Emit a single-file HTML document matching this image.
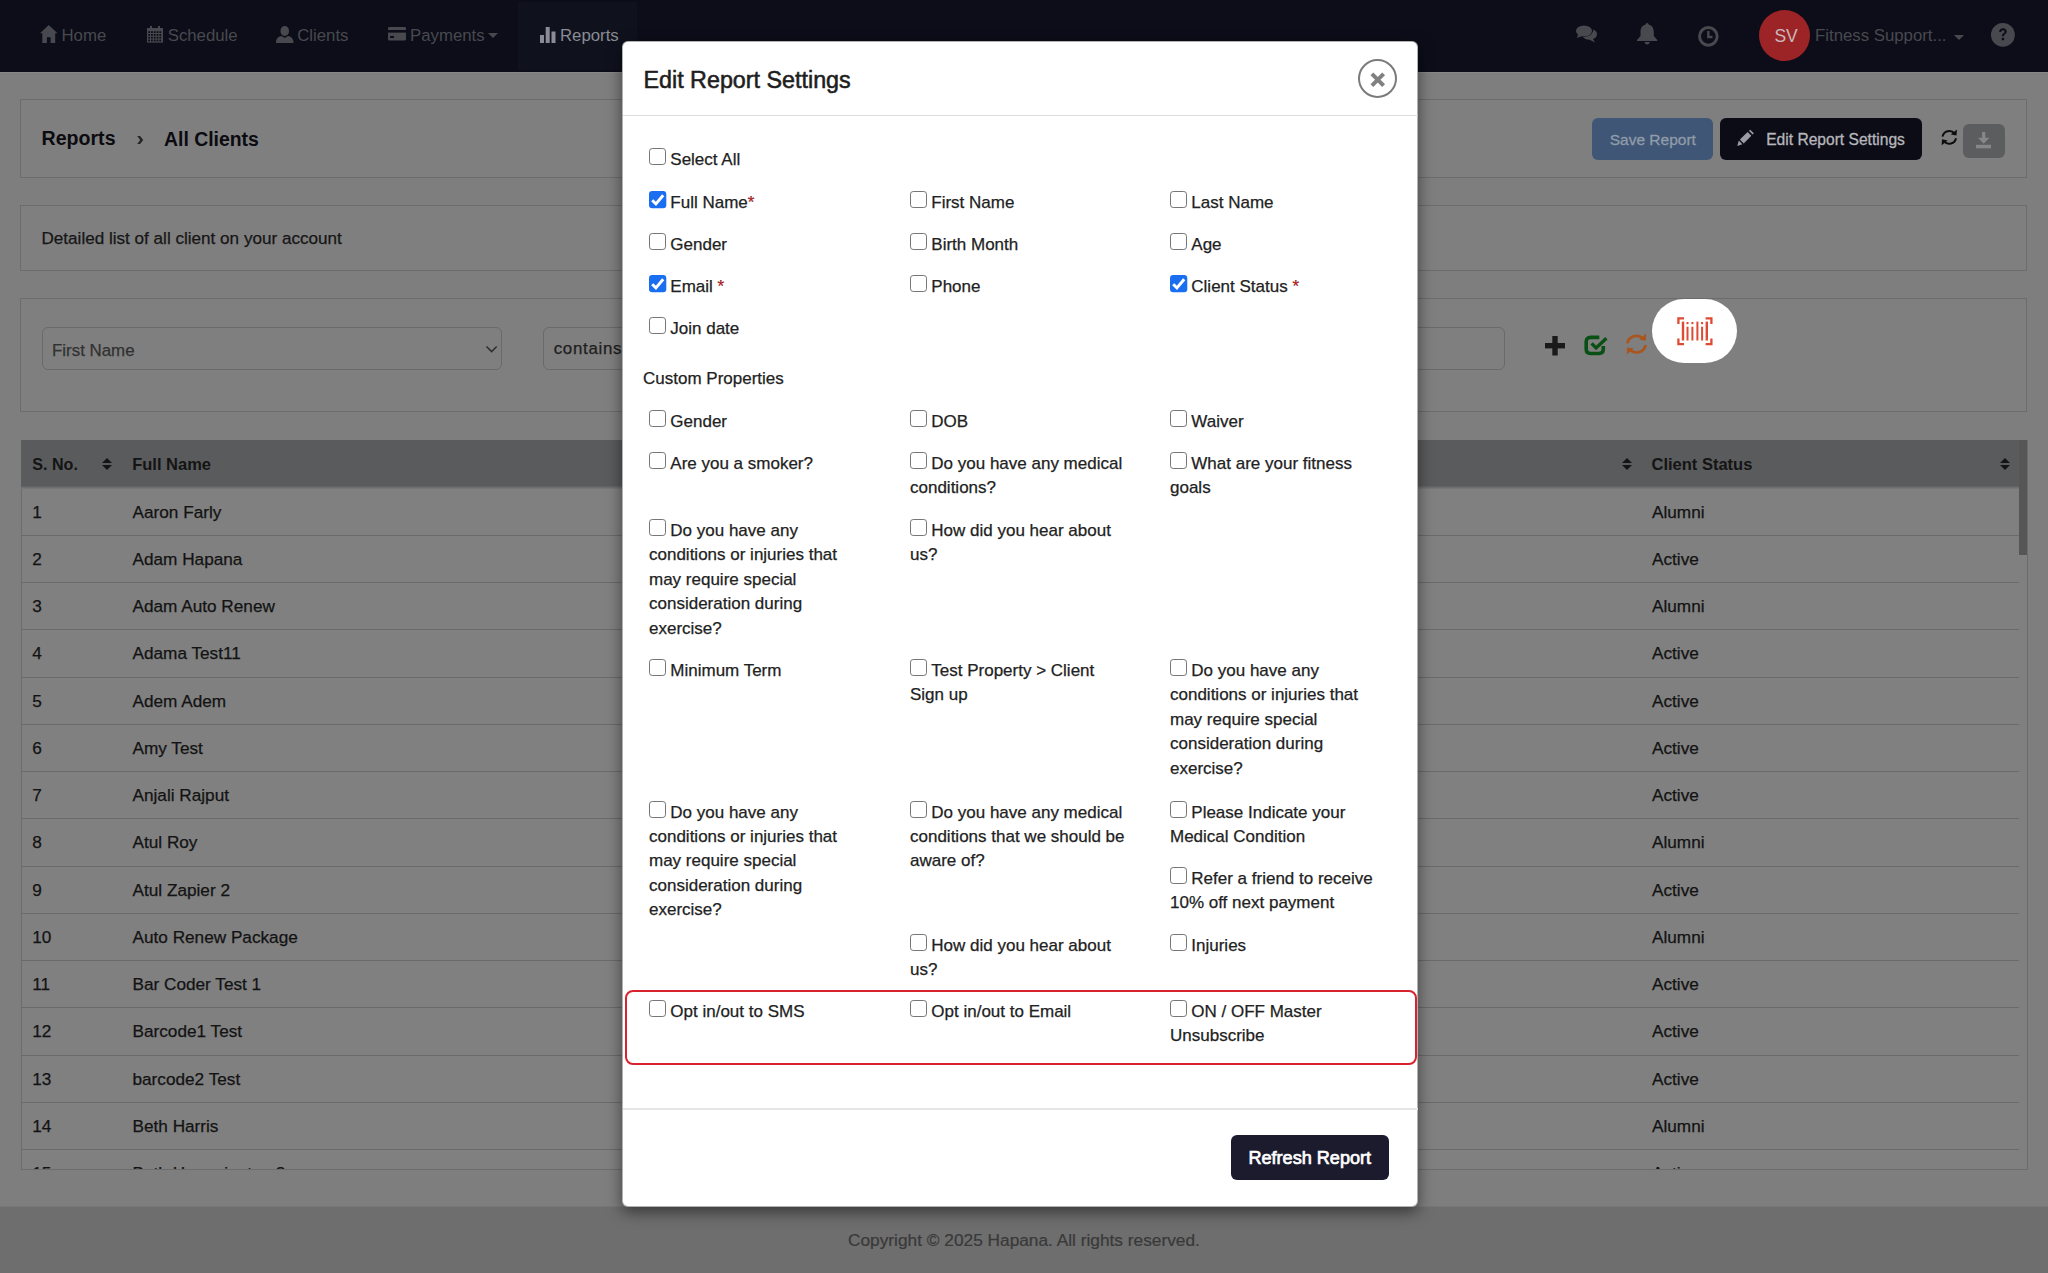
<!DOCTYPE html>
<html><head><meta charset="utf-8"><title>Edit Report Settings</title>
<style>
html,body{margin:0;padding:0;}
body{width:2048px;height:1273px;overflow:hidden;position:relative;background:#7e7e7e;font-family:"Liberation Sans", sans-serif;}
.t{position:absolute;white-space:nowrap;}
.r{position:absolute;box-sizing:border-box;}
svg.r{overflow:visible;}
</style></head><body>

<div class="r" style="left:0.00px;top:0.00px;width:2048.00px;height:72.00px;background:#0c0d18;"></div>
<div class="r" style="left:518.00px;top:2.00px;width:119.00px;height:68.00px;background:#0f121d;"></div>
<div class="r" style="left:0.00px;top:72.00px;width:2048.00px;height:1.00px;background:#868788;"></div>
<svg class="r" style="left:40.30px;top:25.30px;" width="17.50" height="18.00" viewBox="0 0 17.5 18"><path d="M8.75 0 L17.5 8.2 L15.2 8.2 L15.2 18 L10.6 18 L10.6 12.2 L6.9 12.2 L6.9 18 L2.3 18 L2.3 8.2 L0 8.2 Z" fill="#48494f"/></svg>
<div class="t" style="left:61.50px;top:27.68px;font-size:16.8px;line-height:16.8px;font-weight:400;color:#48494f;">Home</div>
<svg class="r" style="left:146.50px;top:26.30px;" width="16.00" height="16.60" viewBox="0 0 16 16.6"><rect x="0" y="2" width="16" height="14.6" fill="#48494f"/><rect x="3" y="0" width="2" height="4" fill="#48494f"/><rect x="11" y="0" width="2" height="4" fill="#48494f"/><rect x="1.2" y="5.2" width="1.8" height="1.8" fill="#0c0d18"/><rect x="4.0" y="5.2" width="1.8" height="1.8" fill="#0c0d18"/><rect x="6.8" y="5.2" width="1.8" height="1.8" fill="#0c0d18"/><rect x="9.6" y="5.2" width="1.8" height="1.8" fill="#0c0d18"/><rect x="12.4" y="5.2" width="1.8" height="1.8" fill="#0c0d18"/><rect x="1.2" y="8.0" width="1.8" height="1.8" fill="#0c0d18"/><rect x="4.0" y="8.0" width="1.8" height="1.8" fill="#0c0d18"/><rect x="6.8" y="8.0" width="1.8" height="1.8" fill="#0c0d18"/><rect x="9.6" y="8.0" width="1.8" height="1.8" fill="#0c0d18"/><rect x="12.4" y="8.0" width="1.8" height="1.8" fill="#0c0d18"/><rect x="1.2" y="10.8" width="1.8" height="1.8" fill="#0c0d18"/><rect x="4.0" y="10.8" width="1.8" height="1.8" fill="#0c0d18"/><rect x="6.8" y="10.8" width="1.8" height="1.8" fill="#0c0d18"/><rect x="9.6" y="10.8" width="1.8" height="1.8" fill="#0c0d18"/><rect x="12.4" y="10.8" width="1.8" height="1.8" fill="#0c0d18"/><rect x="1.2" y="13.6" width="1.8" height="1.8" fill="#0c0d18"/><rect x="4.0" y="13.6" width="1.8" height="1.8" fill="#0c0d18"/><rect x="6.8" y="13.6" width="1.8" height="1.8" fill="#0c0d18"/><rect x="9.6" y="13.6" width="1.8" height="1.8" fill="#0c0d18"/><rect x="12.4" y="13.6" width="1.8" height="1.8" fill="#0c0d18"/></svg>
<div class="t" style="left:167.70px;top:27.68px;font-size:16.8px;line-height:16.8px;font-weight:400;color:#48494f;">Schedule</div>
<svg class="r" style="left:275.60px;top:26.00px;" width="17.50" height="17.00" viewBox="0 0 17.5 17"><ellipse cx="8.75" cy="5" rx="4.3" ry="5" fill="#48494f"/><path d="M0 17 C0 12 3 10.5 5.5 10 L8.75 12 L12 10 C14.5 10.5 17.5 12 17.5 17 Z" fill="#48494f"/></svg>
<div class="t" style="left:297.20px;top:27.68px;font-size:16.8px;line-height:16.8px;font-weight:400;color:#48494f;">Clients</div>
<svg class="r" style="left:388.20px;top:27.00px;" width="18.00" height="13.60" viewBox="0 0 18 13.6"><rect x="0" y="0" width="18" height="13.6" rx="1.5" fill="#48494f"/><rect x="0" y="3" width="18" height="2.6" fill="#0c0d18"/><rect x="2" y="9" width="4" height="2" fill="#0c0d18"/></svg>
<div class="t" style="left:410.00px;top:27.68px;font-size:16.8px;line-height:16.8px;font-weight:400;color:#48494f;">Payments</div>
<svg class="r" style="left:488.00px;top:33.00px;" width="10.00" height="5.00" viewBox="0 0 10 5"><path d="M0 0 L10 0 L5 5 Z" fill="#48494f"/></svg>
<svg class="r" style="left:539.50px;top:27.00px;" width="15.50" height="16.00" viewBox="0 0 15.5 16"><rect x="0" y="8" width="4" height="8" fill="#8a8b94"/><rect x="5.7" y="0" width="4" height="16" fill="#8a8b94"/><rect x="11.5" y="4.5" width="4" height="11.5" fill="#8a8b94"/></svg>
<div class="t" style="left:560.00px;top:27.68px;font-size:16.8px;line-height:16.8px;font-weight:400;color:#8a8b94;">Reports</div>
<svg class="r" style="left:1575.50px;top:25.00px;" width="21.00" height="17.50" viewBox="0 0 21 17.5"><ellipse cx="8" cy="6" rx="8" ry="5.6" fill="#48494f"/><path d="M2 9.5 L1 13 L6 11 Z" fill="#48494f"/><path d="M17.3 4.5 C20 5.5 21 7.5 21 9.2 C21 11.5 19.5 13 17 14 L19 17.5 L13.5 14.8 C10.5 14.8 8 13.5 7 12 C12.5 12 17 9.5 17.3 4.5 Z" fill="#48494f"/></svg>
<svg class="r" style="left:1636.70px;top:23.40px;" width="20.30" height="21.40" viewBox="0 0 20.3 21.4"><path d="M10.15 0 C11.2 0 11.6 0.8 11.6 1.6 C15.2 2.5 16.8 5.5 16.8 9 L16.8 13 L20.3 17 L20.3 18 L0 18 L0 17 L3.5 13 L3.5 9 C3.5 5.5 5.1 2.5 8.7 1.6 C8.7 0.8 9.1 0 10.15 0 Z" fill="#48494f"/><path d="M7.6 19 L12.7 19 C12.7 20.5 11.6 21.4 10.15 21.4 C8.7 21.4 7.6 20.5 7.6 19 Z" fill="#48494f"/></svg>
<svg class="r" style="left:1697.70px;top:25.70px;" width="20.70" height="20.80" viewBox="0 0 20.7 20.8"><circle cx="10.35" cy="10.4" r="8.8" fill="none" stroke="#48494f" stroke-width="3"/><path d="M10.35 5 L10.35 11 L14.5 11" fill="none" stroke="#48494f" stroke-width="2.4"/></svg>
<div class="r" style="left:1759px;top:9.5px;width:51px;height:51px;border-radius:50%;background:#9c2427;"></div>
<div class="t" style="left:1774.40px;top:27.59px;font-size:17.5px;line-height:17.5px;font-weight:400;color:#c9b9ba;">SV</div>
<div class="t" style="left:1815.00px;top:27.98px;font-size:16.8px;line-height:16.8px;font-weight:400;color:#48494f;">Fitness Support...</div>
<svg class="r" style="left:1954.00px;top:35.00px;" width="10.00" height="5.00" viewBox="0 0 10 5"><path d="M0 0 L10 0 L5 5 Z" fill="#48494f"/></svg>
<svg class="r" style="left:1990.80px;top:23.40px;" width="23.80" height="23.80" viewBox="0 0 23.8 23.8"><circle cx="11.9" cy="11.9" r="11.9" fill="#48494f"/><path d="M8.2 9 C8.2 6.5 10 5.3 12 5.3 C14.3 5.3 15.8 6.7 15.8 8.6 C15.8 11 12.9 11.3 12.9 13.3 L10.9 13.3 C10.9 10.2 13.6 10.2 13.6 8.7 C13.6 7.8 12.9 7.2 11.9 7.2 C10.9 7.2 10.3 7.9 10.3 9 Z" fill="#0c0d18"/><rect x="10.8" y="14.8" width="2.3" height="2.4" fill="#0c0d18"/></svg>
<div class="r" style="left:20.00px;top:99.00px;width:2007.00px;height:78.50px;border:1px solid #6c6c6c;background:#7f7f7f;"></div>
<div class="t" style="left:41.50px;top:129.41px;font-size:19.6px;line-height:19.6px;font-weight:700;color:#0b0b10;">Reports</div>
<svg class="r" style="left:137.00px;top:135.90px;" width="6.30" height="8.10" viewBox="0 0 6.3 8.1"><path d="M0.2 0 L3.1 0 L6.2 4.05 L3.1 8.1 L0.2 8.1 L3.2 4.05 Z" fill="#262626"/></svg>
<div class="t" style="left:164.00px;top:129.58px;font-size:19.4px;line-height:19.4px;font-weight:700;color:#0b0b10;">All Clients</div>
<div class="r" style="left:1592.30px;top:117.60px;width:120.50px;height:42.30px;background:#405677;border-radius:6px;"></div>
<div class="t" style="left:1609.70px;top:131.98px;font-size:15.5px;line-height:15.5px;font-weight:400;color:#909ca8;-webkit-text-stroke:0.3px #909ca8;">Save Report</div>
<div class="r" style="left:1720.00px;top:117.60px;width:202.00px;height:42.30px;background:#0c0c16;border-radius:6px;"></div>
<svg class="r" style="left:1736.50px;top:130.00px;" width="16.50" height="16.50" viewBox="0 0 16.5 16.5"><path d="M0.3 15.9 L1.8 10.6 L5.4 14.3 Z" fill="#9c9ca6"/><path d="M2.9 9.6 L10.6 1.9 L14.4 5.7 L6.7 13.4 Z" fill="#9c9ca6"/><path d="M11.9 0.8 L13.2 -0.3 L16.9 3.2 L15.6 4.5 Z" fill="#9c9ca6"/></svg>
<div class="t" style="left:1766.20px;top:131.89px;font-size:15.6px;line-height:15.6px;font-weight:400;color:#b6b6bc;-webkit-text-stroke:0.3px #b6b6bc;">Edit Report Settings</div>
<svg class="r" style="left:1941.00px;top:129.00px;" width="16.50" height="16.80" viewBox="0 0 16.5 16.8"><path d="M13.6 4.6 A6.9 6.9 0 0 0 1.5 7.6" fill="none" stroke="#0d0d0d" stroke-width="2"/><path d="M15.9 0.6 L15.5 6.6 L9.8 5.4 Z" fill="#0d0d0d"/><path d="M2.9 12.2 A6.9 6.9 0 0 0 15.0 9.2" fill="none" stroke="#0d0d0d" stroke-width="2"/><path d="M0.6 16.3 L1 10.3 L6.8 11.4 Z" fill="#0d0d0d"/></svg>
<div class="r" style="left:1963.20px;top:123.50px;width:42.10px;height:34.20px;background:#5c5d5f;border-radius:6px;"></div>
<svg class="r" style="left:1976.00px;top:132.40px;" width="15.00" height="16.50" viewBox="0 0 15 16.5"><path d="M6.1 0 L9.3 0 L9.3 5.8 L13.4 5.8 L7.7 11.7 L2 5.8 L6.1 5.8 Z" fill="#878787"/><rect x="0" y="12.8" width="15" height="3.5" fill="#878787"/></svg>
<div class="r" style="left:20.00px;top:205.00px;width:2007.00px;height:65.50px;border:1px solid #6c6c6c;background:#7f7f7f;"></div>
<div class="t" style="left:41.50px;top:229.52px;font-size:17.1px;line-height:17.1px;font-weight:400;color:#161616;-webkit-text-stroke:0.25px #161616;">Detailed list of all client on your account</div>
<div class="r" style="left:20.00px;top:298.30px;width:2007.00px;height:113.70px;border:1px solid #6c6c6c;background:#7f7f7f;"></div>
<div class="r" style="left:41.70px;top:326.60px;width:460.70px;height:43.80px;border:1px solid #6a6a6a;border-radius:6px;"></div>
<div class="t" style="left:52.00px;top:342.69px;font-size:16.9px;line-height:16.9px;font-weight:400;color:#313131;-webkit-text-stroke:0.25px #313131;">First Name</div>
<svg class="r" style="left:486.00px;top:345.70px;" width="11.20" height="6.30" viewBox="0 0 11.2 6.3"><path d="M0.5 0.5 L5.6 5.6 L10.7 0.5" fill="none" stroke="#2e2e2e" stroke-width="1.5"/></svg>
<div class="r" style="left:543.00px;top:326.60px;width:962.20px;height:43.80px;border:1px solid #6a6a6a;border-radius:6px;"></div>
<div class="t" style="left:553.70px;top:341.49px;font-size:16.9px;line-height:16.9px;font-weight:400;color:#1e1e1e;letter-spacing:0.7px;-webkit-text-stroke:0.25px #1e1e1e;">contains</div>
<svg class="r" style="left:1545.00px;top:336.00px;" width="20.00" height="19.50" viewBox="0 0 20 19.5"><rect x="7.3" y="0" width="5.4" height="19.5" fill="#1a1a1a"/><rect x="0" y="7" width="20" height="5.4" fill="#1a1a1a"/></svg>
<svg class="r" style="left:1584.00px;top:334.50px;" width="23.00" height="21.00" viewBox="0 0 23 21"><path d="M15.3 2.4 L6.6 2.4 Q2.2 2.4 2.2 6.8 L2.2 14.1 Q2.2 18.5 6.6 18.5 L14.9 18.5 Q19.3 18.5 19.3 14.1 L19.3 11" fill="none" stroke="#0a4f14" stroke-width="3.6"/><path d="M7.6 8.4 L12.1 12.9 L22.4 3.3" fill="none" stroke="#0a4f14" stroke-width="3.4"/></svg>
<svg class="r" style="left:1625.00px;top:333.00px;" width="23.00" height="22.00" viewBox="0 0 23 22"><path d="M17.9 5.6 A9.2 9.2 0 0 0 2.3 10.3" fill="none" stroke="#a9551d" stroke-width="2.7"/><path d="M21 0.6 L20.9 7.7 L14.3 6.8 Z" fill="#a9551d"/><path d="M5.1 16.7 A9.2 9.2 0 0 0 20.7 11.9" fill="none" stroke="#a9551d" stroke-width="2.7"/><path d="M1.9 21.5 L2.1 14.5 L8.6 15.4 Z" fill="#a9551d"/></svg>
<div class="r" style="left:20.50px;top:439.60px;width:2007.00px;height:730.60px;border-left:1px solid #6c6c6c;border-right:1px solid #6c6c6c;border-bottom:1px solid #6c6c6c;background:#808080;overflow:hidden;"></div>
<div class="r" style="left:21.00px;top:439.60px;width:1998.00px;height:46.60px;background:#5a5b5c;"></div>
<div class="r" style="left:21.00px;top:486.20px;width:1998.00px;height:2.80px;background:linear-gradient(#5f6060,#7a7b7b);"></div>
<div class="t" style="left:32.30px;top:455.87px;font-size:16.1px;line-height:16.1px;font-weight:700;color:#141414;">S. No.</div>
<svg class="r" style="left:102.00px;top:457.70px;" width="10.00" height="12.00" viewBox="0 0 10 12"><path d="M0 5 L5 0 L10 5 Z" fill="#141414"/><path d="M0 7 L5 12 L10 7 Z" fill="#141414"/></svg>
<div class="t" style="left:132.20px;top:455.53px;font-size:16.5px;line-height:16.5px;font-weight:700;color:#141414;">Full Name</div>
<svg class="r" style="left:1621.80px;top:457.70px;" width="10.00" height="12.00" viewBox="0 0 10 12"><path d="M0 5 L5 0 L10 5 Z" fill="#141414"/><path d="M0 7 L5 12 L10 7 Z" fill="#141414"/></svg>
<div class="t" style="left:1651.50px;top:455.53px;font-size:16.5px;line-height:16.5px;font-weight:700;color:#141414;">Client Status</div>
<svg class="r" style="left:1999.80px;top:457.70px;" width="10.00" height="12.00" viewBox="0 0 10 12"><path d="M0 5 L5 0 L10 5 Z" fill="#141414"/><path d="M0 7 L5 12 L10 7 Z" fill="#141414"/></svg>
<div class="r" style="left:2019.00px;top:439.60px;width:8.00px;height:115.10px;background:#565656;"></div>
<div class="r" style="left:21px;top:489px;width:1998px;height:680px;overflow:hidden;">
<div class="t" style="left:11.30px;top:14.74px;font-size:17.2px;line-height:17.2px;font-weight:400;color:#131313;-webkit-text-stroke:0.25px #131313;">1</div>
<div class="t" style="left:111.50px;top:14.74px;font-size:17.2px;line-height:17.2px;font-weight:400;color:#131313;-webkit-text-stroke:0.25px #131313;">Aaron Farly</div>
<div class="t" style="left:1631.00px;top:14.74px;font-size:17.2px;line-height:17.2px;font-weight:400;color:#131313;-webkit-text-stroke:0.25px #131313;">Alumni</div>
<div class="r" style="left:0.00px;top:45.80px;width:1998.00px;height:1.20px;background:#6a6a6a;"></div>
<div class="t" style="left:11.30px;top:61.99px;font-size:17.2px;line-height:17.2px;font-weight:400;color:#131313;-webkit-text-stroke:0.25px #131313;">2</div>
<div class="t" style="left:111.50px;top:61.99px;font-size:17.2px;line-height:17.2px;font-weight:400;color:#131313;-webkit-text-stroke:0.25px #131313;">Adam Hapana</div>
<div class="t" style="left:1631.00px;top:61.99px;font-size:17.2px;line-height:17.2px;font-weight:400;color:#131313;-webkit-text-stroke:0.25px #131313;">Active</div>
<div class="r" style="left:0.00px;top:93.05px;width:1998.00px;height:1.20px;background:#6a6a6a;"></div>
<div class="t" style="left:11.30px;top:109.24px;font-size:17.2px;line-height:17.2px;font-weight:400;color:#131313;-webkit-text-stroke:0.25px #131313;">3</div>
<div class="t" style="left:111.50px;top:109.24px;font-size:17.2px;line-height:17.2px;font-weight:400;color:#131313;-webkit-text-stroke:0.25px #131313;">Adam Auto Renew</div>
<div class="t" style="left:1631.00px;top:109.24px;font-size:17.2px;line-height:17.2px;font-weight:400;color:#131313;-webkit-text-stroke:0.25px #131313;">Alumni</div>
<div class="r" style="left:0.00px;top:140.30px;width:1998.00px;height:1.20px;background:#6a6a6a;"></div>
<div class="t" style="left:11.30px;top:156.49px;font-size:17.2px;line-height:17.2px;font-weight:400;color:#131313;-webkit-text-stroke:0.25px #131313;">4</div>
<div class="t" style="left:111.50px;top:156.49px;font-size:17.2px;line-height:17.2px;font-weight:400;color:#131313;-webkit-text-stroke:0.25px #131313;">Adama Test11</div>
<div class="t" style="left:1631.00px;top:156.49px;font-size:17.2px;line-height:17.2px;font-weight:400;color:#131313;-webkit-text-stroke:0.25px #131313;">Active</div>
<div class="r" style="left:0.00px;top:187.55px;width:1998.00px;height:1.20px;background:#6a6a6a;"></div>
<div class="t" style="left:11.30px;top:203.74px;font-size:17.2px;line-height:17.2px;font-weight:400;color:#131313;-webkit-text-stroke:0.25px #131313;">5</div>
<div class="t" style="left:111.50px;top:203.74px;font-size:17.2px;line-height:17.2px;font-weight:400;color:#131313;-webkit-text-stroke:0.25px #131313;">Adem Adem</div>
<div class="t" style="left:1631.00px;top:203.74px;font-size:17.2px;line-height:17.2px;font-weight:400;color:#131313;-webkit-text-stroke:0.25px #131313;">Active</div>
<div class="r" style="left:0.00px;top:234.80px;width:1998.00px;height:1.20px;background:#6a6a6a;"></div>
<div class="t" style="left:11.30px;top:250.99px;font-size:17.2px;line-height:17.2px;font-weight:400;color:#131313;-webkit-text-stroke:0.25px #131313;">6</div>
<div class="t" style="left:111.50px;top:250.99px;font-size:17.2px;line-height:17.2px;font-weight:400;color:#131313;-webkit-text-stroke:0.25px #131313;">Amy Test</div>
<div class="t" style="left:1631.00px;top:250.99px;font-size:17.2px;line-height:17.2px;font-weight:400;color:#131313;-webkit-text-stroke:0.25px #131313;">Active</div>
<div class="r" style="left:0.00px;top:282.05px;width:1998.00px;height:1.20px;background:#6a6a6a;"></div>
<div class="t" style="left:11.30px;top:298.24px;font-size:17.2px;line-height:17.2px;font-weight:400;color:#131313;-webkit-text-stroke:0.25px #131313;">7</div>
<div class="t" style="left:111.50px;top:298.24px;font-size:17.2px;line-height:17.2px;font-weight:400;color:#131313;-webkit-text-stroke:0.25px #131313;">Anjali Rajput</div>
<div class="t" style="left:1631.00px;top:298.24px;font-size:17.2px;line-height:17.2px;font-weight:400;color:#131313;-webkit-text-stroke:0.25px #131313;">Active</div>
<div class="r" style="left:0.00px;top:329.30px;width:1998.00px;height:1.20px;background:#6a6a6a;"></div>
<div class="t" style="left:11.30px;top:345.49px;font-size:17.2px;line-height:17.2px;font-weight:400;color:#131313;-webkit-text-stroke:0.25px #131313;">8</div>
<div class="t" style="left:111.50px;top:345.49px;font-size:17.2px;line-height:17.2px;font-weight:400;color:#131313;-webkit-text-stroke:0.25px #131313;">Atul Roy</div>
<div class="t" style="left:1631.00px;top:345.49px;font-size:17.2px;line-height:17.2px;font-weight:400;color:#131313;-webkit-text-stroke:0.25px #131313;">Alumni</div>
<div class="r" style="left:0.00px;top:376.55px;width:1998.00px;height:1.20px;background:#6a6a6a;"></div>
<div class="t" style="left:11.30px;top:392.74px;font-size:17.2px;line-height:17.2px;font-weight:400;color:#131313;-webkit-text-stroke:0.25px #131313;">9</div>
<div class="t" style="left:111.50px;top:392.74px;font-size:17.2px;line-height:17.2px;font-weight:400;color:#131313;-webkit-text-stroke:0.25px #131313;">Atul Zapier 2</div>
<div class="t" style="left:1631.00px;top:392.74px;font-size:17.2px;line-height:17.2px;font-weight:400;color:#131313;-webkit-text-stroke:0.25px #131313;">Active</div>
<div class="r" style="left:0.00px;top:423.80px;width:1998.00px;height:1.20px;background:#6a6a6a;"></div>
<div class="t" style="left:11.30px;top:439.99px;font-size:17.2px;line-height:17.2px;font-weight:400;color:#131313;-webkit-text-stroke:0.25px #131313;">10</div>
<div class="t" style="left:111.50px;top:439.99px;font-size:17.2px;line-height:17.2px;font-weight:400;color:#131313;-webkit-text-stroke:0.25px #131313;">Auto Renew Package</div>
<div class="t" style="left:1631.00px;top:439.99px;font-size:17.2px;line-height:17.2px;font-weight:400;color:#131313;-webkit-text-stroke:0.25px #131313;">Alumni</div>
<div class="r" style="left:0.00px;top:471.05px;width:1998.00px;height:1.20px;background:#6a6a6a;"></div>
<div class="t" style="left:11.30px;top:487.24px;font-size:17.2px;line-height:17.2px;font-weight:400;color:#131313;-webkit-text-stroke:0.25px #131313;">11</div>
<div class="t" style="left:111.50px;top:487.24px;font-size:17.2px;line-height:17.2px;font-weight:400;color:#131313;-webkit-text-stroke:0.25px #131313;">Bar Coder Test 1</div>
<div class="t" style="left:1631.00px;top:487.24px;font-size:17.2px;line-height:17.2px;font-weight:400;color:#131313;-webkit-text-stroke:0.25px #131313;">Active</div>
<div class="r" style="left:0.00px;top:518.30px;width:1998.00px;height:1.20px;background:#6a6a6a;"></div>
<div class="t" style="left:11.30px;top:534.49px;font-size:17.2px;line-height:17.2px;font-weight:400;color:#131313;-webkit-text-stroke:0.25px #131313;">12</div>
<div class="t" style="left:111.50px;top:534.49px;font-size:17.2px;line-height:17.2px;font-weight:400;color:#131313;-webkit-text-stroke:0.25px #131313;">Barcode1 Test</div>
<div class="t" style="left:1631.00px;top:534.49px;font-size:17.2px;line-height:17.2px;font-weight:400;color:#131313;-webkit-text-stroke:0.25px #131313;">Active</div>
<div class="r" style="left:0.00px;top:565.55px;width:1998.00px;height:1.20px;background:#6a6a6a;"></div>
<div class="t" style="left:11.30px;top:581.74px;font-size:17.2px;line-height:17.2px;font-weight:400;color:#131313;-webkit-text-stroke:0.25px #131313;">13</div>
<div class="t" style="left:111.50px;top:581.74px;font-size:17.2px;line-height:17.2px;font-weight:400;color:#131313;-webkit-text-stroke:0.25px #131313;">barcode2 Test</div>
<div class="t" style="left:1631.00px;top:581.74px;font-size:17.2px;line-height:17.2px;font-weight:400;color:#131313;-webkit-text-stroke:0.25px #131313;">Active</div>
<div class="r" style="left:0.00px;top:612.80px;width:1998.00px;height:1.20px;background:#6a6a6a;"></div>
<div class="t" style="left:11.30px;top:628.99px;font-size:17.2px;line-height:17.2px;font-weight:400;color:#131313;-webkit-text-stroke:0.25px #131313;">14</div>
<div class="t" style="left:111.50px;top:628.99px;font-size:17.2px;line-height:17.2px;font-weight:400;color:#131313;-webkit-text-stroke:0.25px #131313;">Beth Harris</div>
<div class="t" style="left:1631.00px;top:628.99px;font-size:17.2px;line-height:17.2px;font-weight:400;color:#131313;-webkit-text-stroke:0.25px #131313;">Alumni</div>
<div class="r" style="left:0.00px;top:660.05px;width:1998.00px;height:1.20px;background:#6a6a6a;"></div>
<div class="t" style="left:11.30px;top:676.24px;font-size:17.2px;line-height:17.2px;font-weight:400;color:#131313;-webkit-text-stroke:0.25px #131313;">15</div>
<div class="t" style="left:111.50px;top:676.24px;font-size:17.2px;line-height:17.2px;font-weight:400;color:#131313;-webkit-text-stroke:0.25px #131313;">Beth Harrsaington 2</div>
<div class="t" style="left:1631.00px;top:676.24px;font-size:17.2px;line-height:17.2px;font-weight:400;color:#131313;-webkit-text-stroke:0.25px #131313;">Active</div>
<div class="r" style="left:0.00px;top:707.30px;width:1998.00px;height:1.20px;background:#6a6a6a;"></div>
</div>
<div class="r" style="left:0.00px;top:1206.60px;width:2048.00px;height:66.40px;background:#6e6e6e;"></div>
<div class="r" style="left:0.00px;top:1205.80px;width:2048.00px;height:1.40px;background:#777;"></div>
<div class="t" style="left:848.00px;top:1232.36px;font-size:17.3px;line-height:17.3px;font-weight:400;color:#393939;-webkit-text-stroke:0.2px #393939;">Copyright &copy; 2025 Hapana. All rights reserved.</div>
<div class="r" style="left:1652px;top:299px;width:85px;height:64px;border-radius:32px;background:#ffffff;"></div>
<svg class="r" style="left:1676.60px;top:316.50px;" width="36.00" height="28.50" viewBox="0 0 36 28.5"><path d="M7 1.3 L1.4 1.3 L1.4 7 M1.4 21.5 L1.4 27.2 L7 27.2 M28.6 1.3 L34.4 1.3 L34.4 7 M34.4 21.5 L34.4 27.2 L28.6 27.2" fill="none" stroke="#de4a33" stroke-width="2.3"/><rect x="4.8" y="4.6" width="2.4" height="18.9" fill="#de4a33"/><rect x="9.5" y="9.7" width="2" height="13.8" fill="#de4a33"/><rect x="9.5" y="5" width="2" height="2.2" fill="#de4a33"/><rect x="14.4" y="9.7" width="2" height="13.8" fill="#de4a33"/><rect x="14.4" y="5" width="2" height="2.2" fill="#de4a33"/><rect x="19.4" y="4.6" width="2" height="18.9" fill="#de4a33"/><rect x="24.1" y="9.7" width="2" height="13.8" fill="#de4a33"/><rect x="24.1" y="5" width="2" height="2.2" fill="#de4a33"/><rect x="28.6" y="4.6" width="2.4" height="18.9" fill="#de4a33"/></svg>
<div class="r" style="left:622px;top:40.8px;width:796px;height:1166.2px;background:#fff;border:1px solid rgba(0,0,0,0.3);border-radius:6px;box-shadow:0 5px 15px rgba(0,0,0,0.5);"></div>
<div class="t" style="left:643.50px;top:68.58px;font-size:23.3px;line-height:23.3px;font-weight:400;color:#1e1e1e;-webkit-text-stroke:0.55px #1e1e1e;">Edit Report Settings</div>
<div class="r" style="left:1358px;top:58.5px;width:39.3px;height:39.3px;border-radius:50%;border:2px solid #7b7b7b;"></div>
<svg class="r" style="left:1370.00px;top:71.80px;" width="15.50" height="15.50" viewBox="0 0 15.5 15.5"><path d="M1.9 1.9 L13.6 13.6 M13.6 1.9 L1.9 13.6" stroke="#808080" stroke-width="4" stroke-linecap="butt"/></svg>
<div class="r" style="left:622.50px;top:115.00px;width:795.00px;height:1.00px;background:#dcdcdc;"></div>
<div class="r" style="left:622.50px;top:1108.00px;width:795.00px;height:1.50px;background:#e6e6e6;"></div>
<div class="r" style="left:625px;top:989.5px;width:791.5px;height:75.5px;border:2.6px solid #d8232f;border-radius:8px;"></div>
<div class="r" style="left:1231.40px;top:1135.10px;width:157.80px;height:44.70px;background:#1b1b2d;border-radius:6px;"></div>
<div class="t" style="left:1248.40px;top:1148.98px;font-size:18.1px;line-height:18.1px;font-weight:400;color:#ffffff;-webkit-text-stroke:0.7px #fff;">Refresh Report</div>
<div class="r" style="left:649px;top:148px;width:17.3px;height:17.3px;border:1.5px solid #767676;border-radius:3.2px;background:#fff;"></div>
<div class="t" style="left:670.30px;top:151.01px;font-size:17px;line-height:17px;font-weight:400;color:#222222;-webkit-text-stroke:0.25px #222;">Select All</div>
<svg class="r" style="left:649.00px;top:190.60px;" width="17.30" height="17.30" viewBox="0 0 17.3 17.3"><rect x="0" y="0" width="17.3" height="17.3" rx="3.2" fill="#1a6ff1"/><path d="M3.2 9.2 L6.9 12.9 L14.2 4.2" fill="none" stroke="#fff" stroke-width="2.9"/></svg>
<div class="t" style="left:670.30px;top:193.61px;font-size:17px;line-height:17px;font-weight:400;color:#222222;-webkit-text-stroke:0.25px #222;">Full Name<span style="color:#e8161b;">*</span></div>
<div class="r" style="left:910px;top:190.6px;width:17.3px;height:17.3px;border:1.5px solid #767676;border-radius:3.2px;background:#fff;"></div>
<div class="t" style="left:931.30px;top:193.61px;font-size:17px;line-height:17px;font-weight:400;color:#222222;-webkit-text-stroke:0.25px #222;">First Name</div>
<div class="r" style="left:1170px;top:190.6px;width:17.3px;height:17.3px;border:1.5px solid #767676;border-radius:3.2px;background:#fff;"></div>
<div class="t" style="left:1191.30px;top:193.61px;font-size:17px;line-height:17px;font-weight:400;color:#222222;-webkit-text-stroke:0.25px #222;">Last Name</div>
<div class="r" style="left:649px;top:232.8px;width:17.3px;height:17.3px;border:1.5px solid #767676;border-radius:3.2px;background:#fff;"></div>
<div class="t" style="left:670.30px;top:235.81px;font-size:17px;line-height:17px;font-weight:400;color:#222222;-webkit-text-stroke:0.25px #222;">Gender</div>
<div class="r" style="left:910px;top:232.8px;width:17.3px;height:17.3px;border:1.5px solid #767676;border-radius:3.2px;background:#fff;"></div>
<div class="t" style="left:931.30px;top:235.81px;font-size:17px;line-height:17px;font-weight:400;color:#222222;-webkit-text-stroke:0.25px #222;">Birth Month</div>
<div class="r" style="left:1170px;top:232.8px;width:17.3px;height:17.3px;border:1.5px solid #767676;border-radius:3.2px;background:#fff;"></div>
<div class="t" style="left:1191.30px;top:235.81px;font-size:17px;line-height:17px;font-weight:400;color:#222222;-webkit-text-stroke:0.25px #222;">Age</div>
<svg class="r" style="left:649.00px;top:274.50px;" width="17.30" height="17.30" viewBox="0 0 17.3 17.3"><rect x="0" y="0" width="17.3" height="17.3" rx="3.2" fill="#1a6ff1"/><path d="M3.2 9.2 L6.9 12.9 L14.2 4.2" fill="none" stroke="#fff" stroke-width="2.9"/></svg>
<div class="t" style="left:670.30px;top:277.51px;font-size:17px;line-height:17px;font-weight:400;color:#222222;-webkit-text-stroke:0.25px #222;">Email<span style="color:#e8161b;"> *</span></div>
<div class="r" style="left:910px;top:274.5px;width:17.3px;height:17.3px;border:1.5px solid #767676;border-radius:3.2px;background:#fff;"></div>
<div class="t" style="left:931.30px;top:277.51px;font-size:17px;line-height:17px;font-weight:400;color:#222222;-webkit-text-stroke:0.25px #222;">Phone</div>
<svg class="r" style="left:1170.00px;top:274.50px;" width="17.30" height="17.30" viewBox="0 0 17.3 17.3"><rect x="0" y="0" width="17.3" height="17.3" rx="3.2" fill="#1a6ff1"/><path d="M3.2 9.2 L6.9 12.9 L14.2 4.2" fill="none" stroke="#fff" stroke-width="2.9"/></svg>
<div class="t" style="left:1191.30px;top:277.51px;font-size:17px;line-height:17px;font-weight:400;color:#222222;-webkit-text-stroke:0.25px #222;">Client Status<span style="color:#e8161b;"> *</span></div>
<div class="r" style="left:649px;top:317px;width:17.3px;height:17.3px;border:1.5px solid #767676;border-radius:3.2px;background:#fff;"></div>
<div class="t" style="left:670.30px;top:320.01px;font-size:17px;line-height:17px;font-weight:400;color:#222222;-webkit-text-stroke:0.25px #222;">Join date</div>
<div class="t" style="left:643.00px;top:370.31px;font-size:17px;line-height:17px;font-weight:400;color:#222222;-webkit-text-stroke:0.25px #222;">Custom Properties</div>
<div class="r" style="left:649px;top:409.5px;width:17.3px;height:17.3px;border:1.5px solid #767676;border-radius:3.2px;background:#fff;"></div>
<div class="t" style="left:670.30px;top:412.51px;font-size:17px;line-height:17px;font-weight:400;color:#222222;-webkit-text-stroke:0.25px #222;">Gender</div>
<div class="r" style="left:910px;top:409.5px;width:17.3px;height:17.3px;border:1.5px solid #767676;border-radius:3.2px;background:#fff;"></div>
<div class="t" style="left:931.30px;top:412.51px;font-size:17px;line-height:17px;font-weight:400;color:#222222;-webkit-text-stroke:0.25px #222;">DOB</div>
<div class="r" style="left:1170px;top:409.5px;width:17.3px;height:17.3px;border:1.5px solid #767676;border-radius:3.2px;background:#fff;"></div>
<div class="t" style="left:1191.30px;top:412.51px;font-size:17px;line-height:17px;font-weight:400;color:#222222;-webkit-text-stroke:0.25px #222;">Waiver</div>
<div class="r" style="left:649px;top:452px;width:17.3px;height:17.3px;border:1.5px solid #767676;border-radius:3.2px;background:#fff;"></div>
<div class="t" style="left:670.30px;top:455.01px;font-size:17px;line-height:17px;font-weight:400;color:#222222;-webkit-text-stroke:0.25px #222;">Are you a smoker?</div>
<div class="r" style="left:910px;top:452px;width:17.3px;height:17.3px;border:1.5px solid #767676;border-radius:3.2px;background:#fff;"></div>
<div class="t" style="left:931.30px;top:455.01px;font-size:17px;line-height:17px;font-weight:400;color:#222222;-webkit-text-stroke:0.25px #222;">Do you have any medical</div>
<div class="t" style="left:910.00px;top:479.46px;font-size:17px;line-height:17px;font-weight:400;color:#222222;-webkit-text-stroke:0.25px #222;">conditions?</div>
<div class="r" style="left:1170px;top:452px;width:17.3px;height:17.3px;border:1.5px solid #767676;border-radius:3.2px;background:#fff;"></div>
<div class="t" style="left:1191.30px;top:455.01px;font-size:17px;line-height:17px;font-weight:400;color:#222222;-webkit-text-stroke:0.25px #222;">What are your fitness</div>
<div class="t" style="left:1170.00px;top:479.46px;font-size:17px;line-height:17px;font-weight:400;color:#222222;-webkit-text-stroke:0.25px #222;">goals</div>
<div class="r" style="left:649px;top:519px;width:17.3px;height:17.3px;border:1.5px solid #767676;border-radius:3.2px;background:#fff;"></div>
<div class="t" style="left:670.30px;top:522.01px;font-size:17px;line-height:17px;font-weight:400;color:#222222;-webkit-text-stroke:0.25px #222;">Do you have any</div>
<div class="t" style="left:649.00px;top:546.46px;font-size:17px;line-height:17px;font-weight:400;color:#222222;-webkit-text-stroke:0.25px #222;">conditions or injuries that</div>
<div class="t" style="left:649.00px;top:570.91px;font-size:17px;line-height:17px;font-weight:400;color:#222222;-webkit-text-stroke:0.25px #222;">may require special</div>
<div class="t" style="left:649.00px;top:595.36px;font-size:17px;line-height:17px;font-weight:400;color:#222222;-webkit-text-stroke:0.25px #222;">consideration during</div>
<div class="t" style="left:649.00px;top:619.81px;font-size:17px;line-height:17px;font-weight:400;color:#222222;-webkit-text-stroke:0.25px #222;">exercise?</div>
<div class="r" style="left:910px;top:519px;width:17.3px;height:17.3px;border:1.5px solid #767676;border-radius:3.2px;background:#fff;"></div>
<div class="t" style="left:931.30px;top:522.01px;font-size:17px;line-height:17px;font-weight:400;color:#222222;-webkit-text-stroke:0.25px #222;">How did you hear about</div>
<div class="t" style="left:910.00px;top:546.46px;font-size:17px;line-height:17px;font-weight:400;color:#222222;-webkit-text-stroke:0.25px #222;">us?</div>
<div class="r" style="left:649px;top:659px;width:17.3px;height:17.3px;border:1.5px solid #767676;border-radius:3.2px;background:#fff;"></div>
<div class="t" style="left:670.30px;top:662.01px;font-size:17px;line-height:17px;font-weight:400;color:#222222;-webkit-text-stroke:0.25px #222;">Minimum Term</div>
<div class="r" style="left:910px;top:659px;width:17.3px;height:17.3px;border:1.5px solid #767676;border-radius:3.2px;background:#fff;"></div>
<div class="t" style="left:931.30px;top:662.01px;font-size:17px;line-height:17px;font-weight:400;color:#222222;-webkit-text-stroke:0.25px #222;">Test Property &gt; Client</div>
<div class="t" style="left:910.00px;top:686.46px;font-size:17px;line-height:17px;font-weight:400;color:#222222;-webkit-text-stroke:0.25px #222;">Sign up</div>
<div class="r" style="left:1170px;top:659px;width:17.3px;height:17.3px;border:1.5px solid #767676;border-radius:3.2px;background:#fff;"></div>
<div class="t" style="left:1191.30px;top:662.01px;font-size:17px;line-height:17px;font-weight:400;color:#222222;-webkit-text-stroke:0.25px #222;">Do you have any</div>
<div class="t" style="left:1170.00px;top:686.46px;font-size:17px;line-height:17px;font-weight:400;color:#222222;-webkit-text-stroke:0.25px #222;">conditions or injuries that</div>
<div class="t" style="left:1170.00px;top:710.91px;font-size:17px;line-height:17px;font-weight:400;color:#222222;-webkit-text-stroke:0.25px #222;">may require special</div>
<div class="t" style="left:1170.00px;top:735.36px;font-size:17px;line-height:17px;font-weight:400;color:#222222;-webkit-text-stroke:0.25px #222;">consideration during</div>
<div class="t" style="left:1170.00px;top:759.81px;font-size:17px;line-height:17px;font-weight:400;color:#222222;-webkit-text-stroke:0.25px #222;">exercise?</div>
<div class="r" style="left:649px;top:800.5px;width:17.3px;height:17.3px;border:1.5px solid #767676;border-radius:3.2px;background:#fff;"></div>
<div class="t" style="left:670.30px;top:803.51px;font-size:17px;line-height:17px;font-weight:400;color:#222222;-webkit-text-stroke:0.25px #222;">Do you have any</div>
<div class="t" style="left:649.00px;top:827.96px;font-size:17px;line-height:17px;font-weight:400;color:#222222;-webkit-text-stroke:0.25px #222;">conditions or injuries that</div>
<div class="t" style="left:649.00px;top:852.41px;font-size:17px;line-height:17px;font-weight:400;color:#222222;-webkit-text-stroke:0.25px #222;">may require special</div>
<div class="t" style="left:649.00px;top:876.86px;font-size:17px;line-height:17px;font-weight:400;color:#222222;-webkit-text-stroke:0.25px #222;">consideration during</div>
<div class="t" style="left:649.00px;top:901.31px;font-size:17px;line-height:17px;font-weight:400;color:#222222;-webkit-text-stroke:0.25px #222;">exercise?</div>
<div class="r" style="left:910px;top:800.5px;width:17.3px;height:17.3px;border:1.5px solid #767676;border-radius:3.2px;background:#fff;"></div>
<div class="t" style="left:931.30px;top:803.51px;font-size:17px;line-height:17px;font-weight:400;color:#222222;-webkit-text-stroke:0.25px #222;">Do you have any medical</div>
<div class="t" style="left:910.00px;top:827.96px;font-size:17px;line-height:17px;font-weight:400;color:#222222;-webkit-text-stroke:0.25px #222;">conditions that we should be</div>
<div class="t" style="left:910.00px;top:852.41px;font-size:17px;line-height:17px;font-weight:400;color:#222222;-webkit-text-stroke:0.25px #222;">aware of?</div>
<div class="r" style="left:1170px;top:800.5px;width:17.3px;height:17.3px;border:1.5px solid #767676;border-radius:3.2px;background:#fff;"></div>
<div class="t" style="left:1191.30px;top:803.51px;font-size:17px;line-height:17px;font-weight:400;color:#222222;-webkit-text-stroke:0.25px #222;">Please Indicate your</div>
<div class="t" style="left:1170.00px;top:827.96px;font-size:17px;line-height:17px;font-weight:400;color:#222222;-webkit-text-stroke:0.25px #222;">Medical Condition</div>
<div class="r" style="left:1170px;top:867px;width:17.3px;height:17.3px;border:1.5px solid #767676;border-radius:3.2px;background:#fff;"></div>
<div class="t" style="left:1191.30px;top:870.01px;font-size:17px;line-height:17px;font-weight:400;color:#222222;-webkit-text-stroke:0.25px #222;">Refer a friend to receive</div>
<div class="t" style="left:1170.00px;top:894.46px;font-size:17px;line-height:17px;font-weight:400;color:#222222;-webkit-text-stroke:0.25px #222;">10% off next payment</div>
<div class="r" style="left:910px;top:933.8px;width:17.3px;height:17.3px;border:1.5px solid #767676;border-radius:3.2px;background:#fff;"></div>
<div class="t" style="left:931.30px;top:936.81px;font-size:17px;line-height:17px;font-weight:400;color:#222222;-webkit-text-stroke:0.25px #222;">How did you hear about</div>
<div class="t" style="left:910.00px;top:961.26px;font-size:17px;line-height:17px;font-weight:400;color:#222222;-webkit-text-stroke:0.25px #222;">us?</div>
<div class="r" style="left:1170px;top:933.8px;width:17.3px;height:17.3px;border:1.5px solid #767676;border-radius:3.2px;background:#fff;"></div>
<div class="t" style="left:1191.30px;top:936.81px;font-size:17px;line-height:17px;font-weight:400;color:#222222;-webkit-text-stroke:0.25px #222;">Injuries</div>
<div class="r" style="left:649px;top:1000px;width:17.3px;height:17.3px;border:1.5px solid #767676;border-radius:3.2px;background:#fff;"></div>
<div class="t" style="left:670.30px;top:1003.01px;font-size:17px;line-height:17px;font-weight:400;color:#222222;-webkit-text-stroke:0.25px #222;">Opt in/out to SMS</div>
<div class="r" style="left:910px;top:1000px;width:17.3px;height:17.3px;border:1.5px solid #767676;border-radius:3.2px;background:#fff;"></div>
<div class="t" style="left:931.30px;top:1003.01px;font-size:17px;line-height:17px;font-weight:400;color:#222222;-webkit-text-stroke:0.25px #222;">Opt in/out to Email</div>
<div class="r" style="left:1170px;top:1000px;width:17.3px;height:17.3px;border:1.5px solid #767676;border-radius:3.2px;background:#fff;"></div>
<div class="t" style="left:1191.30px;top:1003.01px;font-size:17px;line-height:17px;font-weight:400;color:#222222;-webkit-text-stroke:0.25px #222;">ON / OFF Master</div>
<div class="t" style="left:1170.00px;top:1027.46px;font-size:17px;line-height:17px;font-weight:400;color:#222222;-webkit-text-stroke:0.25px #222;">Unsubscribe</div>
</body></html>
